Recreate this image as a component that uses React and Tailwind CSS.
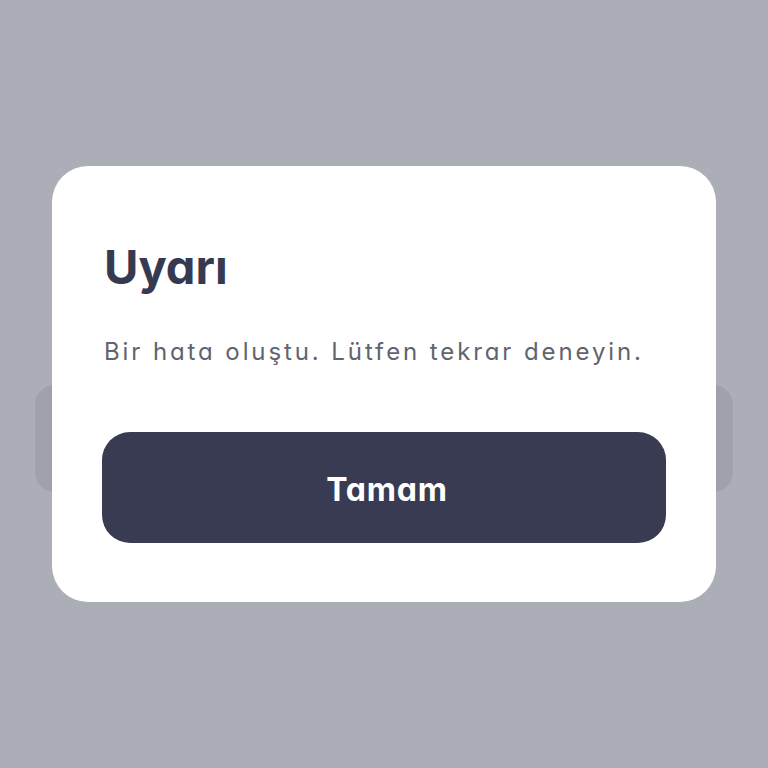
export default function App() {
  return (
    <div className="relative flex h-screen w-full items-center justify-center bg-[#abadb7] font-['Inter',sans-serif] [font-feature-settings:'cv11']">
      {/* element peeking out behind the dialog */}
      <div className="absolute left-[35px] right-[35px] top-[385px] h-[107px] rounded-[20px] bg-[#9fa1ab]" />
      <div className="relative flex w-[664px] flex-col rounded-[36px] bg-white px-[50px] pb-[59px] pt-[73px]">
        <h1 className="pl-[2px] text-[47px] font-bold leading-[56px] text-[#363a50]">Uyarı</h1>
        <p className="mt-[41px] pl-[2px] text-[24px] leading-[32px] tracking-[2.9px] text-[#62636e]">
          Bir hata oluştu. Lütfen tekrar deneyin.
        </p>
        <button className="mt-[64px] h-[111px] w-full rounded-[28px] bg-[#383b51] pl-[6px] pt-[4px] text-[32px] font-bold tracking-[0.8px] text-white">
          Tamam
        </button>
      </div>
    </div>
  );
}
